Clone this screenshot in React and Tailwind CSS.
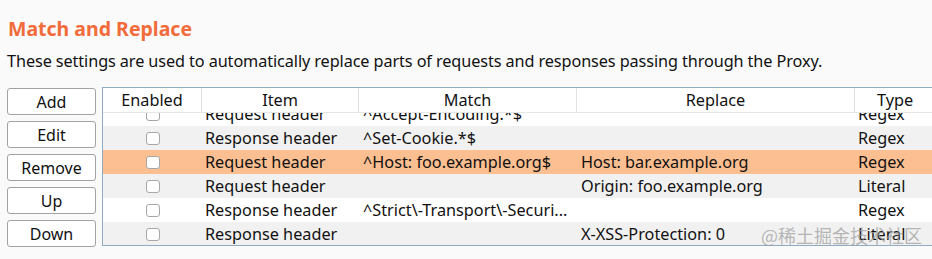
import React from 'react';

const rows = [
  { item: 'Request header', match: '^Accept-Encoding.*$', replace: '', type: 'Regex' },
  { item: 'Response header', match: '^Set-Cookie.*$', replace: '', type: 'Regex' },
  { item: 'Request header', match: '^Host: foo.example.org$', replace: 'Host: bar.example.org', type: 'Regex', selected: true },
  { item: 'Request header', match: '', replace: 'Origin: foo.example.org', type: 'Literal' },
  { item: 'Response header', match: '^Strict\\-Transport\\-Securi...', replace: '', type: 'Regex' },
  { item: 'Response header', match: '', replace: 'X-XSS-Protection: 0', type: 'Literal' },
];

const Button = ({ children }) => (
  <button className="h-[27px] w-[89px] rounded-[3px] border border-[#a3a3a3] bg-white text-[16px] text-[#111] leading-none">
    {children}
  </button>
);

const HeaderCell = ({ children, className }) => (
  <div className={`flex items-center justify-center border-r border-[#e3e3e3] ${className}`}>{children}</div>
);

const App = () => {
  return (
    <div className="relative h-[259px] w-[932px] overflow-hidden bg-[#fafafa] font-['Noto_Sans',sans-serif] text-[#111]">
      <h1 className="pl-2 pt-[15px] text-[19.5px] font-bold leading-[28px] text-[#f26c3b]">Match and Replace</h1>
      <p className="mt-[6px] pl-[7px] text-[16.25px] leading-[24px] tracking-[-0.1px]">
        These settings are used to automatically replace parts of requests and responses passing through the Proxy.
      </p>

      <div className="mt-[14px] flex gap-[6px] pl-[7px]">
        <div className="flex flex-col gap-[6px] pt-px">
          <Button>Add</Button>
          <Button>Edit</Button>
          <Button>Remove</Button>
          <Button>Up</Button>
          <Button>Down</Button>
        </div>

        <div className="h-[159px] w-[860px] shrink-0 overflow-hidden border border-[#8facc4] bg-white text-[16.25px]">
          <div className="relative z-10 flex h-[25px] border-b border-[#e6e6e6] bg-white">
            <HeaderCell className="w-[99px]">Enabled</HeaderCell>
            <HeaderCell className="w-[157px]">Item</HeaderCell>
            <HeaderCell className="w-[218px]">Match</HeaderCell>
            <HeaderCell className="w-[278px]">Replace</HeaderCell>
            <div className="flex w-[80px] items-center justify-center">Type</div>
          </div>
          <div className="h-[132px] overflow-hidden">
            <div className="-mt-[11px]">
              {rows.map((r, i) => (
                <div
                  key={i}
                  className={`flex h-[24px] items-center ${r.selected ? 'bg-[#fcbf91]' : i % 2 ? 'bg-[#f1f1f1]' : 'bg-white'}`}
                >
                  <div className="flex w-[99px] justify-center">
                    <span className="block h-[13px] w-[14px] rounded-[3px] border border-[#a7a7a7] bg-white" />
                  </div>
                  <div className="w-[157px] truncate pl-[3px]">{r.item}</div>
                  <div className="w-[218px] truncate pl-[4px]">{r.match}</div>
                  <div className="w-[278px] truncate pl-[4px]">{r.replace}</div>
                  <div className="w-[80px] pl-[3px]">{r.type}</div>
                </div>
              ))}
            </div>
          </div>
        </div>
      </div>

      <div className="absolute left-[761px] top-[222px] font-['Noto_Sans_CJK_SC',sans-serif] text-[18px] leading-[26px] text-[#9a9a9a]/70">
        @稀土掘金技术社区
      </div>
    </div>
  );
};

export default App;
